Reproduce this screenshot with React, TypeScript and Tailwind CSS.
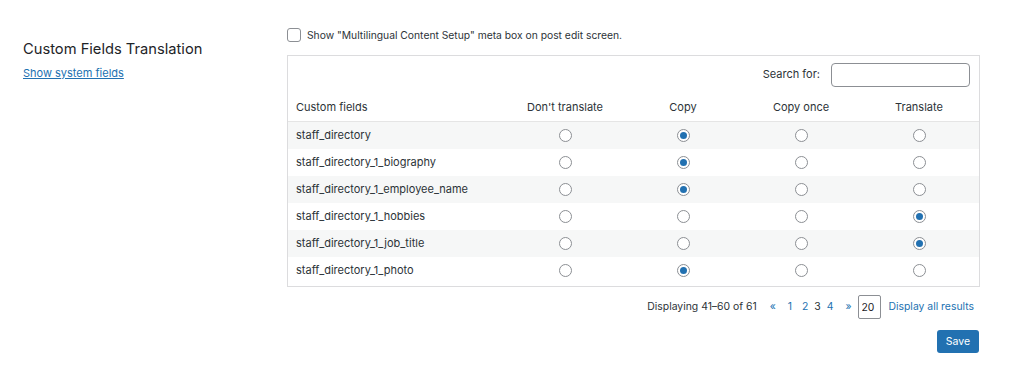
import { useState } from "react";

const fields = [
  { name: "staff_directory", value: 1 },
  { name: "staff_directory_1_biography", value: 1 },
  { name: "staff_directory_1_employee_name", value: 1 },
  { name: "staff_directory_1_hobbies", value: 3 },
  { name: "staff_directory_1_job_title", value: 3 },
  { name: "staff_directory_1_photo", value: 1 },
];

const columns = ["Don't translate", "Copy", "Copy once", "Translate"];

function Radio({ checked, onClick }: { checked: boolean; onClick: () => void }) {
  return (
    <button
      onClick={onClick}
      className="w-[13px] h-[13px] rounded-full border border-[#8c8f94] bg-white flex items-center justify-center"
    >
      {checked && <span className="w-[7px] h-[7px] rounded-full bg-[#2271b1]" />}
    </button>
  );
}

export default function App() {
  const [values, setValues] = useState(fields.map((f) => f.value));

  return (
    <div className="w-[1024px] h-[371px] bg-white text-[#2c3338] font-['Inter','Liberation_Sans',sans-serif] flex">
      <div className="w-[287px] pl-[23px] pt-[39px] shrink-0">
        <h2 className="text-[14.7px] leading-[20px] text-[#1d2327]">Custom Fields Translation</h2>
        <a href="#" className="block mt-[7px] text-[11px] leading-[14px] text-[#2271b1] underline">
          Show system fields
        </a>
      </div>

      <div className="w-[693px] pt-[28px]">
        <label className="flex items-center gap-[6px] text-[10.3px] leading-[14px]">
          <span className="w-[14px] h-[14px] rounded-[3px] border border-[#8c8f94] bg-white" />
          Show "Multilingual Content Setup" meta box on post edit screen.
        </label>

        <div className="mt-[13px] border border-[#dcdcde] text-[11px]">
          <div className="flex items-center justify-end gap-[11px] pt-[6px] pr-[9px] h-[31px]">
            <span>Search for:</span>
            <input className="w-[139px] h-[24px] rounded-[4px] border border-[#8c8f94] outline-none" />
          </div>
          <div className="flex items-center h-[35px] pt-[7px] border-b border-[#e5e5e5]">
            <div className="w-[218px] pl-[8px]">Custom fields</div>
            {columns.map((c) => (
              <div key={c} className="w-[118px] text-center">
                {c}
              </div>
            ))}
          </div>
          {fields.map((f, i) => (
            <div
              key={f.name}
              className={`flex items-center h-[27px] ${i % 2 === 0 ? "bg-[#f6f7f7]" : "bg-white"}`}
            >
              <div className="w-[218px] pl-[8px]">{f.name}</div>
              {columns.map((c, j) => (
                <div key={c} className="w-[118px] flex justify-center">
                  <Radio
                    checked={values[i] === j}
                    onClick={() => setValues(values.map((v, k) => (k === i ? j : v)))}
                  />
                </div>
              ))}
            </div>
          ))}
          <div className="h-[2px]" />
        </div>

        <div className="flex items-center justify-end mt-[8px] text-[10.4px] pr-[6px]">
          <span>Displaying 41–60 of 61</span>
          <div className="flex items-center ml-[13px]">
            <a href="#" className="text-[#2271b1]">«</a>
            <a href="#" className="text-[#2271b1] ml-[12px]">1</a>
            <a href="#" className="text-[#2271b1] ml-[10px]">2</a>
            <span className="ml-[6px]">3</span>
            <a href="#" className="text-[#2271b1] ml-[6px]">4</a>
            <a href="#" className="text-[#2271b1] ml-[12px]">»</a>
          </div>
          <input
            defaultValue="20"
            className="ml-[6px] w-[23px] h-[24px] border border-[#8c8f94] rounded-[2px] text-[10.4px] pl-[3px] outline-none text-[#1d2327]"
          />
          <a href="#" className="ml-[8px] text-[#2271b1]">Display all results</a>
        </div>

        <div className="flex justify-end mt-[11px] pr-[1px]">
          <button className="h-[23px] w-[42px] rounded-[3px] bg-[#2271b1] text-white text-[10.5px]">Save</button>
        </div>
      </div>
    </div>
  );
}
